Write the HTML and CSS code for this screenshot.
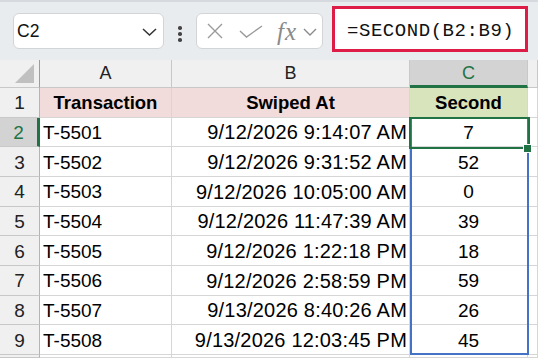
FILE: index.html
```html
<!DOCTYPE html>
<html>
<head>
<meta charset="utf-8">
<link rel="stylesheet" href="styles.css">
</head>
<body>
<div class="app">
  <div class="toolbar">
    <div class="namebox">
      <span class="ref">C2</span>
      <svg class="chev" width="15" height="8" viewBox="0 0 15 8"><path d="M1 1 L7.5 7 L14 1" fill="none" stroke="#333" stroke-width="1.5"/></svg>
    </div>
    <div class="dots"><i></i><i></i><i></i></div>
    <div class="fxbox">
      <svg class="ix" width="16" height="16" viewBox="0 0 16 16"><path d="M1 1 L15 15 M15 1 L1 15" stroke="#9a9a9a" stroke-width="1.4" fill="none"/></svg>
      <svg class="ick" width="24" height="13" viewBox="0 0 24 13"><path d="M1 6 L7.5 12 L23 1" stroke="#9a9a9a" stroke-width="1.4" fill="none"/></svg>
      <span class="fx">fx</span>
      <svg class="chev2" width="14" height="8" viewBox="0 0 14 8"><path d="M1 1 L7 7 L13 1" fill="none" stroke="#8a8a8a" stroke-width="1.4"/></svg>
    </div>
    <div class="formula">=SECOND(B2:B9)</div>
  </div>
  <div class="sheet">
    <div class="grid">
      <div class="c h corner"><span class="tri"></span></div>
      <div class="c h">A</div>
      <div class="c h">B</div>
      <div class="c h hsel">C</div>
      <div class="c h"></div>

      <div class="c h rh">1</div>
      <div class="c pink ctr">Transaction</div>
      <div class="c pink ctr">Swiped At</div>
      <div class="c green ctr">Second</div>
      <div class="c"></div>

      <div class="c h rh rsel">2</div>
      <div class="c">T-5501</div>
      <div class="c r dt">9/12/2026 9:14:07 AM</div>
      <div class="c ctr">7</div>
      <div class="c"></div>

      <div class="c h rh">3</div>
      <div class="c">T-5502</div>
      <div class="c r dt">9/12/2026 9:31:52 AM</div>
      <div class="c ctr">52</div>
      <div class="c"></div>

      <div class="c h rh">4</div>
      <div class="c">T-5503</div>
      <div class="c r dt">9/12/2026 10:05:00 AM</div>
      <div class="c ctr">0</div>
      <div class="c"></div>

      <div class="c h rh">5</div>
      <div class="c">T-5504</div>
      <div class="c r dt">9/12/2026 11:47:39 AM</div>
      <div class="c ctr">39</div>
      <div class="c"></div>

      <div class="c h rh">6</div>
      <div class="c">T-5505</div>
      <div class="c r dt">9/12/2026 1:22:18 PM</div>
      <div class="c ctr">18</div>
      <div class="c"></div>

      <div class="c h rh">7</div>
      <div class="c">T-5506</div>
      <div class="c r dt">9/12/2026 2:58:59 PM</div>
      <div class="c ctr">59</div>
      <div class="c"></div>

      <div class="c h rh">8</div>
      <div class="c">T-5507</div>
      <div class="c r dt">9/13/2026 8:40:26 AM</div>
      <div class="c ctr">26</div>
      <div class="c"></div>

      <div class="c h rh">9</div>
      <div class="c">T-5508</div>
      <div class="c r dt">9/13/2026 12:03:45 PM</div>
      <div class="c ctr">45</div>
      <div class="c"></div>

      <div class="c h rh"></div>
      <div class="c"></div>
      <div class="c"></div>
      <div class="c"></div>
      <div class="c"></div>
    </div>
    <div class="spill"></div>
    <div class="selbox"></div>
    <div class="handle"></div>
  </div>
</div>
</body>
</html>
```

FILE: styles.css
```css
* { box-sizing: border-box; }
html, body { margin: 0; padding: 0; }
body { width: 538px; height: 358px; overflow: hidden; background: #fff; font-family: "Liberation Sans", Arial, sans-serif; }

.toolbar {
  height: 60px;
  background: #e9ecef;
  border-top: 2px solid #d6d9dd;
  display: flex;
  align-items: flex-start;
  padding: 4px 0 0 13px;
}
.namebox {
  margin-top: 7px;
  width: 151px;
  height: 36px;
  background: #fff;
  border: 1px solid #d2d4d7;
  border-radius: 6px;
  display: flex;
  align-items: center;
  justify-content: space-between;
  padding: 0 6px 0 3px;
}
.ref { font-size: 17.5px; color: #111; }
.chev { margin-top: 2px; }
.dots {
  margin: 20px 0 0 14px;
  width: 4px;
  display: flex;
  flex-direction: column;
  gap: 2.5px;
}
.dots i { display: block; width: 3.5px; height: 3.5px; border-radius: 50%; background: #444; }
.fxbox {
  margin: 7px 0 0 14px;
  width: 127px;
  height: 36px;
  background: #fff;
  border: 1px solid #d2d4d7;
  border-radius: 6px;
  display: flex;
  align-items: center;
  padding-left: 10px;
}
.ick { margin-left: 16px; }
.fx {
  margin-left: 14px;
  font-family: "Liberation Serif", "Times New Roman", serif;
  font-style: italic;
  font-size: 25px;
  letter-spacing: 1px;
  color: #8a8a8a;
  line-height: 1;
}
.chev2 { margin-left: 6px; margin-top: 2px; }
.formula {
  margin-left: 9px;
  width: 196px;
  height: 46px;
  background: #fff;
  border: 3px solid #dd1d48;
  display: flex;
  align-items: center;
  padding: 3px 0 0 12px;
  font-family: "Liberation Mono", "DejaVu Sans Mono", monospace;
  font-size: 19px;
  letter-spacing: 0.55px;
  color: #111;
}

.sheet { position: relative; }
.grid {
  display: grid;
  grid-template-columns: 40px 132px 238px 118px 1fr;
  grid-template-rows: 28px repeat(9, 29.667px) 3px;
}
.c {
  border-right: 1px solid #d6d6d6;
  border-bottom: 1px solid #d6d6d6;
  display: flex;
  align-items: center;
  padding: 2px 3px 0 3px;
  font-size: 19px;
  color: #000;
  white-space: nowrap;
  overflow: hidden;
}
.r { justify-content: flex-end; }
.dt { font-size: 20px; letter-spacing: 0.2px; padding-right: 2px; }
.ctr { justify-content: center; }
.h {
  background: #f0f0f0;
  border-color: #c8c8c8;
  justify-content: center;
  color: #222;
  font-size: 18px;
  padding: 0;
}
.rh { padding-top: 2px; font-size: 19px; color: #222; border-right-color: #b4b4b4; }
.corner { position: relative; border-right-color: #9c9c9c; }
.tri {
  position: absolute;
  right: 5px;
  bottom: 4px;
  width: 0;
  height: 0;
  border-left: 19px solid transparent;
  border-bottom: 19px solid #c0c0c0;
}
.hsel {
  background: #d3d3d3;
  color: #217346;
  border-bottom: 3px solid #217346;
  padding-top: 2px;
}
.rsel {
  background: #d3d3d3;
  color: #217346;
  border-right: 3px solid #217346;
}
.pink { background: #f2dcdb; font-weight: bold; font-size: 18.5px; }
.green { background: #d8e4bc; font-weight: bold; font-size: 18.5px; }

.spill {
  position: absolute;
  left: 410px;
  top: 57px;
  width: 119px;
  height: 238px;
  border: 2px solid #4472c4;
}
.selbox {
  position: absolute;
  left: 408.5px;
  top: 56.7px;
  width: 121px;
  height: 32.6px;
  border: 2.5px solid #217346;
}
.handle {
  position: absolute;
  left: 523px;
  top: 84px;
  width: 9px;
  height: 9px;
  background: #217346;
  border: 1px solid #fff;
}
```
